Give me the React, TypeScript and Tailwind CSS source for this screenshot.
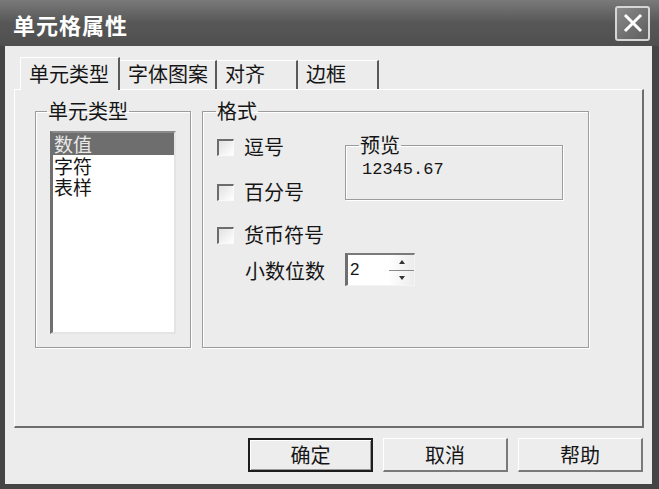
import React from "react";

function Checkbox({ label }: { label: string }) {
  return (
    <div className="flex items-center h-[24px]">
      <div className="w-[17px] h-[17px] border-t-2 border-l-2 border-r border-b border-t-[#6c6c6c] border-l-[#6c6c6c] border-r-[#fafafa] border-b-[#fafafa] bg-linear-to-br from-[#e2e2e2] to-white" />
      <span className="ml-[10px] text-[20px] leading-[24px]">{label}</span>
    </div>
  );
}

function Tab({ label, w, active }: { label: string; w: string; active?: boolean }) {
  return (
    <div
      className={
        active
          ? `${w} h-[33px] pl-[8px] pt-[5px] border-r-2 border-r-[#5a5a5a] border-t border-t-white border-l border-l-white bg-[#ececec] text-[20px] leading-[22px] relative z-10`
          : `${w} h-[30px] pl-[8px] pt-[2px] border-r-2 border-r-[#5a5a5a] border-t border-t-white text-[20px] leading-[22px]`
      }
    >
      {label}
    </div>
  );
}

export default function App() {
  return (
    <div className="w-[659px] h-[489px] bg-[#454545] flex flex-col font-['Noto_Sans_CJK_SC',sans-serif] text-[#151515] overflow-hidden">
      {/* Title bar */}
      <div className="h-[46px] flex items-center justify-between pl-[13px] pr-[9px] bg-linear-to-b from-[#7a7a7a] via-[#575757] to-[#4f4f4f]">
        <span className="text-white font-bold text-[22px] leading-[24px] tracking-[1px] mt-[1px]">单元格属性</span>
        <div className="w-[35px] h-[35px] rounded-[3px] border-2 border-[#d6d6d6] bg-linear-to-br from-[#8a8a8a] to-[#5e5e5e] flex items-center justify-center">
          <svg width="22" height="22" viewBox="0 0 22 22">
            <path d="M4 4 L18 18 M18 4 L4 18" stroke="white" strokeWidth="3" strokeLinecap="square" />
          </svg>
        </div>
      </div>

      {/* Body */}
      <div className="flex-1 ml-[5px] mr-[7px] mb-[5px] bg-[#ececec] flex flex-col pt-[11px]">
        {/* Tabs */}
        <div className="h-[33px] flex items-end pl-[15px] -mb-[1px]">
          <Tab label="单元类型" w="w-[100px]" active />
          <Tab label="字体图案" w="w-[97px]" />
          <Tab label="对齐" w="w-[81px]" />
          <Tab label="边框" w="w-[81px]" />
        </div>

        {/* Tab panel */}
        <div className="h-[339px] ml-[9px] mr-[8px] border-t border-l border-t-white border-l-white border-r-2 border-b-2 border-r-[#6e6e6e] border-b-[#6e6e6e] flex items-start pl-[20px] pt-[10px] gap-[11px]">
          {/* 单元类型 group */}
          <fieldset className="w-[156px] h-[248px] border border-[#9c9c9c] shadow-[inset_1px_1px_0_#fff,1px_1px_0_#fff]">
            <legend className="ml-[11px] px-[1px] text-[20px] leading-[22px]">单元类型</legend>
            <div className="mt-[9px] ml-[14px] w-[126px] h-[203px] bg-white border-l-[3px] border-t-[2px] border-l-[#6f6f6f] border-t-[#8a8a8a] border-r-2 border-b-2 border-r-[#e4e4e4] border-b-[#e4e4e4] text-[19px] leading-[21px]">
              <div className="bg-[#6e6e6e] text-[#e8e8e8] pl-[1px] h-[22px] leading-[22px]">数值</div>
              <div className="pl-[1px] h-[21px]">字符</div>
              <div className="pl-[1px] h-[21px]">表样</div>
            </div>
          </fieldset>

          {/* 格式 group */}
          <fieldset className="w-[387px] h-[248px] border border-[#9c9c9c] shadow-[inset_1px_1px_0_#fff,1px_1px_0_#fff]">
            <legend className="ml-[13px] px-[1px] text-[20px] leading-[22px]">格式</legend>
            <div className="flex flex-col pl-[14px] pt-[13px]">
              <div className="flex items-start">
                <div className="w-[128px] flex flex-col">
                  <Checkbox label="逗号" />
                  <div className="mt-[21px]">
                    <Checkbox label="百分号" />
                  </div>
                </div>
                <fieldset className="-mt-[1px] w-[218px] h-[66px] border border-[#9c9c9c] shadow-[inset_1px_1px_0_#fff,1px_1px_0_#fff]">
                  <legend className="ml-[13px] px-[1px] text-[20px] leading-[22px]">预览</legend>
                  <div className="pl-[16px] mt-[4px] font-['Liberation_Mono',monospace] text-[17px] leading-[20px]">12345.67</div>
                </fieldset>
              </div>
              <div className="mt-[19px]">
                <Checkbox label="货币符号" />
              </div>
              <div className="mt-[6px] flex items-center">
                <span className="ml-[28px] w-[100px] text-[20px] leading-[24px] mt-[2px]">小数位数</span>
                <div className="w-[70px] h-[33px] flex bg-white border-l-[3px] border-t-2 border-l-[#6f6f6f] border-t-[#7a7a7a] border-r border-b border-r-[#f4f4f4] border-b-[#f4f4f4]">
                  <span className="flex-1 pl-[2px] pt-[5px] font-['Liberation_Sans',sans-serif] text-[17px] leading-[20px]">2</span>
                  <div className="w-[25px] flex flex-col bg-linear-to-r from-white to-[#ececec]">
                    <div className="flex-1 flex items-center justify-center border-b border-b-[#8a8a8a]">
                      <svg width="6" height="4" viewBox="0 0 6 4"><path d="M3 0 L6 4 L0 4 Z" fill="#333" /></svg>
                    </div>
                    <div className="flex-1 flex items-center justify-center">
                      <svg width="6" height="4" viewBox="0 0 6 4"><path d="M0 0 L6 0 L3 4 Z" fill="#333" /></svg>
                    </div>
                  </div>
                </div>
              </div>
            </div>
          </fieldset>
        </div>

        {/* Buttons */}
        <div className="h-[34px] mt-[10px] flex justify-end gap-[10px] pr-[9px]">
          <button className="w-[125px] h-[34px] border-2 border-[#1c1c1c] bg-[#ededed] shadow-[inset_1px_1px_0_#fff,inset_-1px_-1px_0_#9a9a9a] text-[20px] leading-[22px]">确定</button>
          <button className="w-[125px] h-[34px] border-t border-l border-t-white border-l-white border-r-2 border-b-2 border-r-[#7a7a7a] border-b-[#7a7a7a] bg-[#ededed] text-[20px] leading-[22px]">取消</button>
          <button className="w-[125px] h-[34px] border-t border-l border-t-white border-l-white border-r-2 border-b-2 border-r-[#7a7a7a] border-b-[#7a7a7a] bg-[#ededed] text-[20px] leading-[22px]">帮助</button>
        </div>
      </div>
    </div>
  );
}
